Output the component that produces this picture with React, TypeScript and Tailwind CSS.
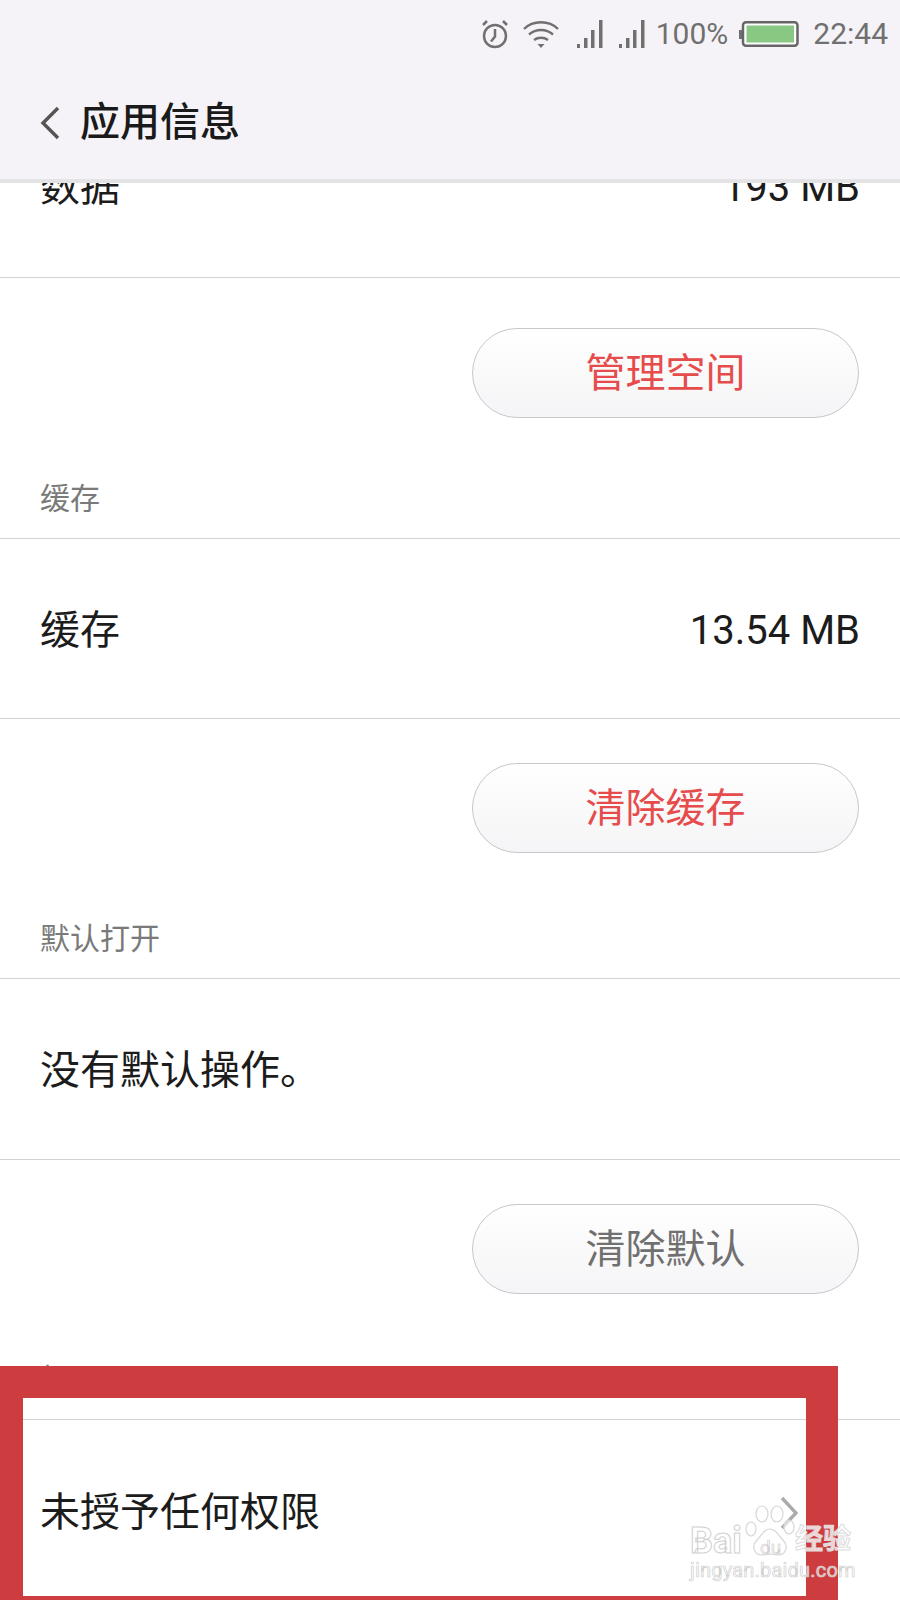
const fontStack = "font-['Roboto','Noto_Sans_CJK_SC',sans-serif]";

const SignalIcon = () => (
  <svg width="26" height="28" viewBox="0 0 26 28" fill="#707070">
    <rect x="0" y="24" width="3" height="4" />
    <rect x="7" y="18" width="3.5" height="10" />
    <rect x="14" y="10" width="3.5" height="18" />
    <rect x="22" y="0" width="3.5" height="28" />
  </svg>
);

const StatusBar = () => (
  <div className="flex h-[66px] items-center justify-end pr-[12px] pt-[2px] text-[30px] text-[#707070]">
    <svg width="28" height="30" viewBox="0 0 28 30" fill="none" stroke="#707070" strokeWidth="2.5">
      <circle cx="14" cy="17" r="11" />
      <path d="M14 10v7.5l-4 5" />
      <path d="M2 6l4-4M26 6l-4-4" />
    </svg>
    <svg className="ml-[14px]" width="36" height="28" viewBox="0 0 36 28" fill="none" stroke="#707070" strokeWidth="2.4">
      <path d="M1 9C10 0 26 0 35 9" />
      <path d="M6 14.5c7-6 17-6 24 0" />
      <path d="M11 20c4-3 10-3 14 0" />
      <path d="M14.5 24h7l-3.5 4z" fill="#707070" stroke="none" />
    </svg>
    <div className="ml-[18px]">
      <SignalIcon />
    </div>
    <div className="ml-[16px]">
      <SignalIcon />
    </div>
    <span className="ml-[11px] leading-none">100%</span>
    <svg className="ml-[11px]" width="60" height="26" viewBox="0 0 60 26">
      <rect x="0" y="9" width="3" height="9" fill="#707070" />
      <rect x="4" y="1.25" width="54.5" height="23.5" rx="3" fill="#fff" stroke="#666" strokeWidth="2.5" />
      <rect x="7.5" y="4.5" width="47.5" height="17" fill="#88c882" />
    </svg>
    <span className="ml-[14px] leading-none">22:44</span>
  </div>
);

const Header = () => (
  <header className="relative z-10 h-[183px] border-b-4 border-[#e4e3e6] bg-[#f5f3f7]">
    <StatusBar />
    <div className="flex h-[113px] items-center pl-[40px]">
      <svg width="20" height="34" viewBox="0 0 20 34" fill="none" stroke="#555" strokeWidth="3.4">
        <path d="M18 2L3 17l15 15" />
      </svg>
      <h1 className="ml-[20px] text-[40px] leading-none font-medium text-[#1a1a1a]">应用信息</h1>
    </div>
  </header>
);

const Row = ({ label, value, box }: { label: string; value?: string; box: string }) => (
  <div className={`flex items-center justify-between border-b border-[#d2d2d2] px-[40px] text-[40px] leading-none text-[#1c1c1c] ${box}`}>
    <span>{label}</span>
    {value && <span>{value}</span>}
  </div>
);

const ButtonBlock = ({
  text,
  tone,
  label,
  box,
}: {
  text: string;
  tone: string;
  label: string;
  box: string;
}) => (
  <div className={`flex flex-col border-b border-[#d2d2d2] ${box}`}>
    <div className="flex justify-end pr-[41px]">
      <button
        className={`h-[90px] w-[387px] rounded-full border border-[#c8c6cb] bg-gradient-to-b from-white to-[#f5f4f6] pt-[2px] text-[40px] leading-none ${tone}`}
      >
        {text}
      </button>
    </div>
    <div className="mt-auto pb-[24px] pl-[40px] text-[30px] leading-none text-[#7a7a7a]">{label}</div>
  </div>
);

const Watermark = () => (
  <div className="absolute top-[1500px] left-[688px] z-30 h-[84px] w-[170px]">
    <svg className="absolute top-[3px] left-[56px]" width="54" height="54" viewBox="0 0 54 54" fill="none" stroke="#d6d6d6" strokeWidth="1.2">
      <ellipse cx="7" cy="26" rx="5" ry="7" fill="#ffffff99" />
      <ellipse cx="18" cy="11" rx="6" ry="8" fill="#ffffff99" />
      <ellipse cx="33" cy="11" rx="6" ry="8" fill="#ffffff99" />
      <ellipse cx="45" cy="24" rx="5" ry="7" fill="#ffffff99" />
      <path d="M26 26c-6 0-8 6-13 11-6 6-3 15 5 15 4 0 5-1 8-1s5 1 8 1c8 0 11-9 5-15-5-5-7-11-13-11z" fill="#ffffff99" />
    </svg>
    <span className="absolute top-[23px] left-[2px] text-[36px] leading-none font-bold text-[#ffffffb0] [-webkit-text-stroke:1px_#d0d0d0]">
      Bai
    </span>
    <span className="absolute top-[38px] left-[72px] text-[19px] leading-none text-[#ffffffb0] [-webkit-text-stroke:0.7px_#cfcfcf]">
      du
    </span>
    <span className="absolute top-[26px] left-[107px] text-[28px] leading-none font-bold text-[#ffffffc8] [-webkit-text-stroke:1px_#ddd]">
      经验
    </span>
    <span className="absolute top-[60px] left-[2px] text-[20px] leading-none tracking-[0.2px] whitespace-nowrap text-[#ffffffb0] [-webkit-text-stroke:0.7px_#cfcfcf]">
      jingyan.baidu.com
    </span>
  </div>
);

export default function App() {
  return (
    <div className={`relative h-[1600px] w-[900px] overflow-hidden bg-white ${fontStack}`}>
      <Header />
      <main className="-mt-[85px]">
        <Row label="数据" value="193 MB" box="h-[180px]" />
        <ButtonBlock text="管理空间" tone="text-[#e64c4c]" label="缓存" box="h-[261px] pt-[50px]" />
        <Row label="缓存" value="13.54 MB" box="h-[180px] pt-[4px]" />
        <ButtonBlock text="清除缓存" tone="text-[#e64c4c]" label="默认打开" box="h-[260px] pt-[44px]" />
        <Row label="没有默认操作。" box="h-[181px] pt-[4px]" />
        <ButtonBlock text="清除默认" tone="text-[#707070]" label="权限" box="h-[260px] pt-[44px]" />
        <div className="flex h-[181px] items-center justify-between pt-[4px] pr-[102px] pl-[40px] text-[40px] leading-none text-[#1c1c1c]">
          <span>未授予任何权限</span>
          <svg width="18" height="34" viewBox="0 0 18 34" fill="none" stroke="#ababab" strokeWidth="3.4">
            <path d="M2 2l14 15L2 32" />
          </svg>
        </div>
      </main>
      {/* annotation frame drawn over the screenshot */}
      <div className="absolute top-[1366px] left-[-9px] z-20 h-[262px] w-[847px] border-[32px] border-[#cd3d40]" />
      <Watermark />
    </div>
  );
}
